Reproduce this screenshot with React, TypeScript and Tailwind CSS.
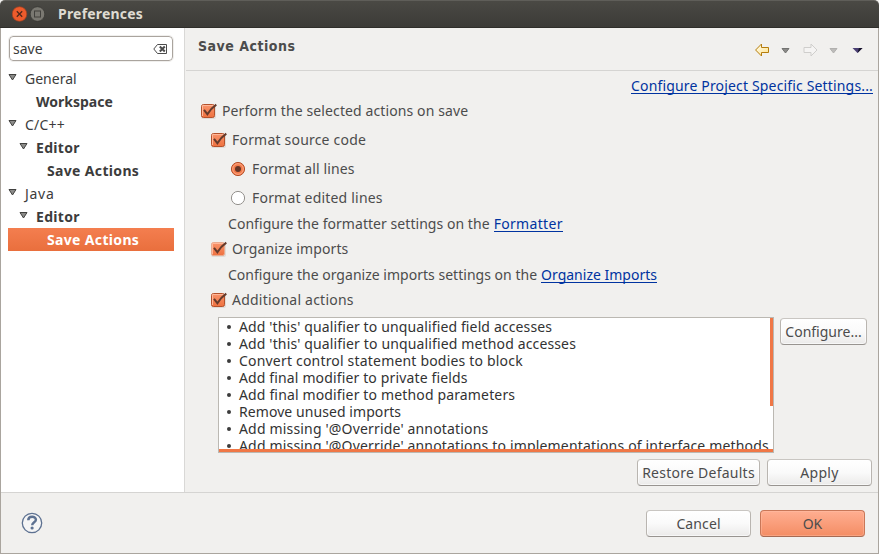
import type { ReactNode } from "react";

function Expander({ className = "" }: { className?: string }) {
  return (
    <svg className={`mb-[4px] shrink-0 ${className}`} width="9" height="8" viewBox="0 0 9 8">
      <path d="M1 1.500h7L4.500 7z" fill="#8b8b89" stroke="#41413f" strokeWidth="1" />
    </svg>
  );
}

function Check({ soft = false }: { soft?: boolean }) {
  return (
    <svg className="shrink-0" width="17" height="16" viewBox="0 0 17 16">
      <defs>
        <linearGradient id="check-fill" x1="0" y1="0" x2="0" y2="1">
          <stop offset="0" stopColor="#f9946c" />
          <stop offset="1" stopColor="#ee713f" />
        </linearGradient>
      </defs>
      <rect x="1" y="2" width="15" height="14" rx="2" fill="#dedbd7" />
      <rect x="1.5" y="1.5" width="13" height="13" rx="2" fill="url(#check-fill)" stroke={soft ? "#e9ab90" : "#b4512b"} />
      <path d="M2.5 13V2.5h11" fill="none" stroke="#ffb799" strokeWidth="1" />
      <path d="M4 6.800l3.400 4.400C9.700 7.500 12 4.600 16.300 1.600" fill="none" stroke="#653b2c" strokeWidth="2" />
    </svg>
  );
}

function Radio({ on = false }: { on?: boolean }) {
  return (
    <svg className="shrink-0" width="16" height="16" viewBox="0 0 16 16">
      <circle cx="8" cy="8" r="6.600" fill={on ? "#f37c4c" : "#ffffff"} stroke={on ? "#b4512b" : "#94918d"} />
      {on && <circle cx="8" cy="8" r="5.300" fill="none" stroke="#fca683" />}
      {on && <circle cx="8" cy="8" r="3" fill="#653526" />}
    </svg>
  );
}

function Option({ className, icon, children }: { className: string; icon: ReactNode; children: ReactNode }) {
  return (
    <div className={`flex shrink-0 items-center ${className}`}>
      {icon}
      <span>{children}</span>
    </div>
  );
}

function TreeRow({ className = "", open = false, children }: { className?: string; open?: boolean; children: ReactNode }) {
  return (
    <li className={`flex h-[23px] items-center ${className}`}>
      {open && <Expander className="mr-[8px]" />}
      <span>{children}</span>
    </li>
  );
}

function Button({ className, children }: { className: string; children: ReactNode }) {
  return (
    <button
      className={`flex shrink-0 items-center justify-center rounded-[4px] border whitespace-nowrap ${className}`}
    >
      {children}
    </button>
  );
}

const plain =
  "border-[#b9b5b0] border-b-[#989490] border-t-[#c9c6c2] bg-linear-to-b from-white via-[#fafafa] to-[#ebeae9] shadow-[inset_0_0_0_1px_#ffffff99]";

const actions = [
  { text: "Add 'this' qualifier to unqualified field accesses", track: "tracking-[0.13px]" },
  { text: "Add 'this' qualifier to unqualified method accesses", track: "tracking-[0.14px]" },
  { text: "Convert control statement bodies to block", track: "tracking-[0.19px]" },
  { text: "Add final modifier to private fields", track: "tracking-[0.14px]" },
  { text: "Add final modifier to method parameters", track: "tracking-[0.15px]" },
  { text: "Remove unused imports", track: "tracking-[0.07px]" },
  { text: "Add missing '@Override' annotations", track: "tracking-[0.17px]" },
  { text: "Add missing '@Override' annotations to implementations of interface methods", track: "tracking-[0.17px]" },
];

const link = "border-b border-[#0033a0] leading-[15px] text-[#0033a0]";

export default function App() {
  return (
    <div className="flex h-[554px] w-[879px] flex-col overflow-hidden bg-[#f1f0ee] font-['Noto_Sans',sans-serif] text-[14px] leading-[20px] whitespace-nowrap text-[#4c4c4c]">
      <header className="flex h-[28px] shrink-0 items-center rounded-t-[5px] border-t border-b border-t-[#5f5e59] border-b-[#2f2e2a] bg-linear-to-b from-[#4a4944] to-[#3c3b37] pl-[12px]">
        <svg width="34" height="16" viewBox="0 0 34 16">
          <circle cx="7.500" cy="8" r="7.300" fill="#ed5b2c" stroke="#a4401f" strokeWidth=".7" />
          <path d="M4.800 5.300l5.400 5.400m0-5.400l-5.400 5.400" stroke="#50281b" strokeWidth="1.300" />
          <circle cx="25.500" cy="8" r="7.300" fill="#7a7871" stroke="#34332f" strokeWidth=".7" />
          <rect x="22.500" y="5" width="6" height="6" fill="none" stroke="#42413d" />
        </svg>
        <span className="ml-[12px] font-bold tracking-[0.2px] text-[#dfdbd2]">Preferences</span>
      </header>

      <div className="flex min-h-0 flex-1 flex-col border-x border-b border-[#aaa59e]">
        <div className="flex h-[465px] shrink-0 border-b border-[#d5d4d2]">
          <aside className="w-[184px] shrink-0 border-r border-[#d9d8d6] bg-white pt-[8px] pl-[8px] text-[#3c3c3c]">
            <div className="flex h-[25px] w-[164px] items-center rounded-[4px] border border-[#aaa49e] pr-[4px] pl-[3px] outline outline-[#f0efed]">
              <span className="flex-1">save</span>
              <svg width="15" height="12" viewBox="0 0 15 12">
                <path d="M4.500 1.500h9v9h-9L.8 6z" fill="#fff" stroke="#4c4c4c" />
                <path d="M6.800 3.500l5 5m0-5L6.800 8.500" stroke="#4c4c4c" strokeWidth="2" />
              </svg>
            </div>
            <ul className="mt-[6px] -ml-px w-[166px]">
              <TreeRow open>General</TreeRow>
              <TreeRow className="pl-[28px] font-bold">Workspace</TreeRow>
              <TreeRow open className="tracking-[0.2px]">C/C++</TreeRow>
              <TreeRow open className="pl-[11px] font-bold tracking-[0.3px]">Editor</TreeRow>
              <TreeRow className="pl-[39px] font-bold tracking-[0.34px]">Save Actions</TreeRow>
              <TreeRow open className="tracking-[0.7px]">Java</TreeRow>
              <TreeRow open className="pl-[11px] font-bold tracking-[0.3px]">Editor</TreeRow>
              <TreeRow className="bg-linear-to-b from-[#f47e4f] to-[#e96f3d] pl-[39px] font-bold tracking-[0.34px] text-white">
                Save Actions
              </TreeRow>
            </ul>
          </aside>

          <main className="flex min-w-0 flex-1 flex-col">
            <div className="ml-px flex h-[43px] shrink-0 justify-between border-b border-[#d5d4d2] pr-[15px] pl-[12px]">
              <h1 className="pt-[8px] font-['DejaVu_Sans_Condensed','DejaVu_Sans',sans-serif] text-[14px] font-bold tracking-[0.5px]">Save Actions</h1>
              <svg className="mt-[14px]" width="108" height="16" viewBox="0 0 108 16">
                <defs>
                  <linearGradient id="back-fill" x1="0" y1="0" x2="1" y2="1">
                    <stop offset="0" stopColor="#fffdf0" />
                    <stop offset="1" stopColor="#ffe28a" />
                  </linearGradient>
                </defs>
                <path d="M.6 8L6.500 2V5.500h7v5h-7V14z" fill="url(#back-fill)" stroke="#b57d0c" strokeLinejoin="round" />
                <path d="M27 6.500h7L30.500 11z" fill="#8b8b89" stroke="#737371" />
                <path d="M62 8l-6-6V5.500h-7v5h7V14z" fill="#f5f4f3" stroke="#cfcecc" strokeLinejoin="round" />
                <path d="M75 6.500h7L78.500 11z" fill="#bdbcba" stroke="#b1b0ae" />
                <path d="M97.500 6h10l-5 5z" fill="#4a3f73" />
                <path d="M104 6h3.500l-5 5z" fill="#17142a" />
              </svg>
            </div>

            <div className="flex h-[26px] shrink-0 items-center justify-end pt-[3px] pr-[5px]">
              <a className={`tracking-[0.16px] ${link}`}>Configure Project Specific Settings...</a>
            </div>
            <Option className="h-[28px] gap-[5px] pl-[15px] tracking-[0.11px]" icon={<Check />}>Perform the selected actions on save</Option>
            <Option className="h-[29px] gap-[5px] pl-[25px] tracking-[0.2px]" icon={<Check />}>Format source code</Option>
            <Option className="h-[29px] gap-[6px] pl-[45px] tracking-[0.14px]" icon={<Radio on />}>Format all lines</Option>
            <Option className="h-[29px] gap-[6px] pl-[45px] tracking-[0.2px]" icon={<Radio />}>Format edited lines</Option>
            <div className="flex h-[23px] shrink-0 items-center pl-[43px]">
              <span className="tracking-[0.05px]">Configure the formatter settings on the</span>
              <a className={`ml-[4px] tracking-[0.32px] ${link}`}>Formatter</a>
            </div>
            <Option className="h-[27px] gap-[5px] pl-[25px] tracking-[0.1px]" icon={<Check soft />}>Organize imports</Option>
            <div className="flex h-[26px] shrink-0 items-center pl-[43px]">
              <span className="tracking-[0.02px]">Configure the organize imports settings on the</span>
              <a className={`ml-[4px] ${link}`}>Organize Imports</a>
            </div>
            <Option className="h-[24px] gap-[5px] pl-[25px] tracking-[0.22px]" icon={<Check />}>Additional actions</Option>

            <div className="mt-[5px] flex h-[136px] shrink-0 gap-[6px] pl-[33px]">
              <div className="flex w-[556px] flex-col overflow-hidden border border-[#bbb8b2] bg-white">
                <div className="flex min-h-0 flex-1">
                  <ul className="min-w-0 flex-1 overflow-hidden text-[#333333]">
                    {actions.map(({ text, track }) => (
                      <li key={text} className="flex h-[17px] items-center leading-[17px]">
                        <span className="ml-[8px] size-[4px] shrink-0 rounded-full bg-[#3c3c3c]" />
                        <span className={`ml-[8px] ${track}`}>{text}</span>
                      </li>
                    ))}
                  </ul>
                  <div className="h-[88px] w-[3px] shrink-0 bg-[#f07746]" />
                </div>
                <div className="h-[3px] shrink-0 bg-[#f07746]" />
              </div>
              <Button className={`mt-px h-[27px] w-[87px] ${plain}`}>Configure...</Button>
            </div>

            <div className="mt-[6px] flex shrink-0 justify-end gap-[7px] pr-[6px]">
              <Button className={`h-[27px] w-[123px] tracking-[0.25px] ${plain}`}>Restore Defaults</Button>
              <Button className={`h-[27px] w-[105px] tracking-[0.3px] ${plain}`}>Apply</Button>
            </div>
          </main>
        </div>

        <footer className="flex flex-1 items-center pt-px pr-[13px] pl-[20px]">
          <svg className="mb-[2px]" width="22" height="22" viewBox="0 0 22 22">
            <circle cx="11" cy="11" r="9.700" fill="#f5f5f5" stroke="#5d7191" strokeWidth="1.300" />
            <path d="M7.300 8.200c0-4.500 7.600-4.500 7.600-.4 0 2.500-3.700 2.500-3.700 5.400" fill="none" stroke="#5d7191" strokeWidth="2.500" />
            <circle cx="11.100" cy="16" r="1.600" fill="#5d7191" />
          </svg>
          <div className="ml-auto flex gap-[9px]">
            <Button className={`h-[27px] w-[105px] tracking-[0.1px] ${plain}`}>Cancel</Button>
            <Button className="h-[27px] w-[105px] border-[#c97758] border-b-[#a76a53] bg-linear-to-b from-[#ffae91] to-[#f48d64] shadow-[inset_0_0_0_1px_#ffc4ad66]">OK</Button>
          </div>
        </footer>
      </div>
    </div>
  );
}
